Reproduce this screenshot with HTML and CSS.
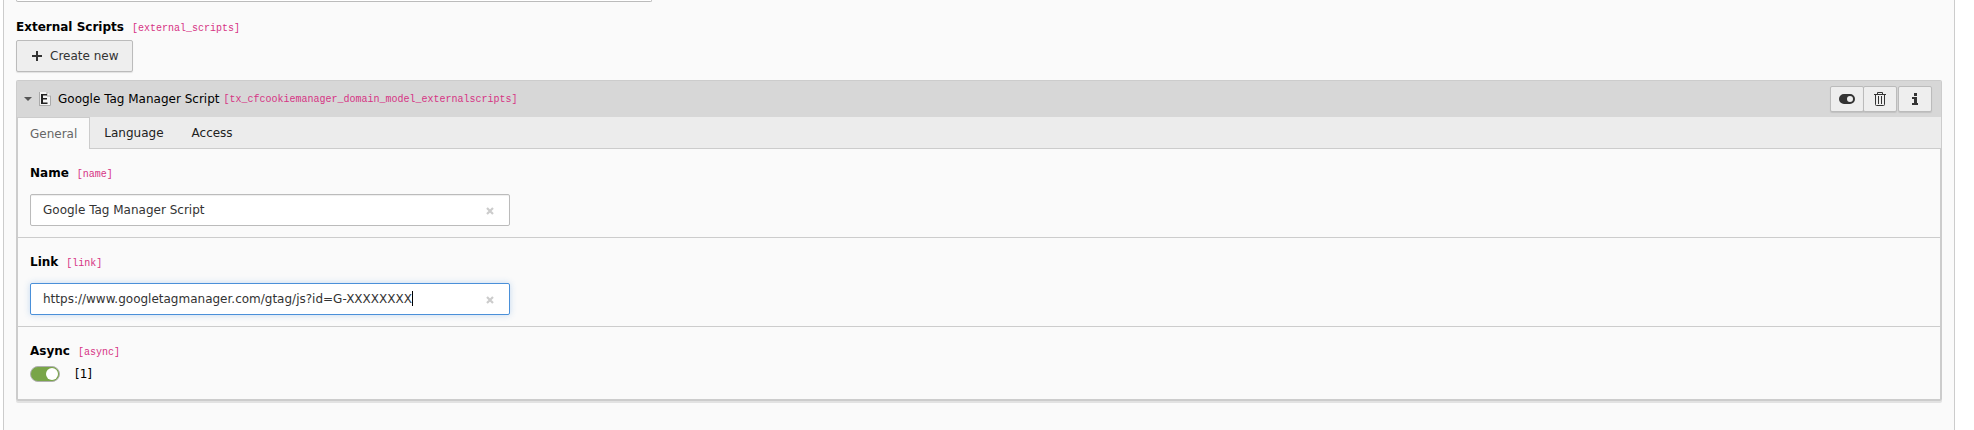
FILE: index.html
```html
<!DOCTYPE html>
<html lang="en">
<head>
<meta charset="utf-8">
<title>External Scripts</title>
<link rel="stylesheet" href="styles.css">
</head>
<body>
<main class="pane">
  <div class="previous-field"></div>
  <div class="heading"><strong>External Scripts</strong><code>[external_scripts]</code></div>
  <button class="btn create" type="button">
    <svg width="10" height="10" viewBox="0 0 10 10" aria-hidden="true"><path d="M4 0h2v4h4v2H6v4H4V6H0V4h4z" fill="#333"/></svg>
    Create new
  </button>
  <section class="record">
    <header class="record-header">
      <svg class="caret" width="8" height="4" viewBox="0 0 8 4" aria-hidden="true"><path d="M0 0h8L4 4z" fill="#555"/></svg>
      <svg class="file" width="12" height="14" viewBox="0 0 12 14" aria-hidden="true"><path d="M0 0h8l4 4v10H0z" fill="#f4f4f4"/><path d="M8 0v4h4M11.5 4v9.5H0M.5 14V0" fill="none" stroke="#aaa"/><path d="M2 2h6v1.500H4V6h4v1.500H4v3h4.500V12H2z" fill="#222"/></svg>
      <span class="record-title">Google Tag Manager Script</span>
      <code>[tx_cfcookiemanager_domain_model_externalscripts]</code>
      <div class="actions">
        <div class="group">
          <button class="btn icon" type="button" aria-label="Toggle visibility"><svg width="16" height="10" viewBox="0 0 16 10"><path d="M5 0h6a5 5 0 0 1 0 10H5A5 5 0 0 1 5 0zm6 2a3 3 0 1 0 0 6 3 3 0 0 0 0-6z" fill="#333" fill-rule="evenodd"/></svg></button>
          <button class="btn icon" type="button" aria-label="Delete"><svg width="12" height="14" viewBox="0 0 12 14" fill="none" stroke="#333"><path d="M0 2.500h12M3.500 2V.5h5V2M1.500 3v9.500q0 1 1 1h7q1 0 1-1V3M4.500 4v8M7.500 4v8"/></svg></button>
        </div>
        <button class="btn icon" type="button" aria-label="Information"><svg width="6" height="12" viewBox="0 0 6 12"><path d="M2 0h3v3H2zM0 4h5v6h1v2H0v-2h2V6H0z" fill="#333"/></svg></button>
      </div>
    </header>
    <nav class="tabs">
      <button class="tab active" type="button">General</button>
      <button class="tab" type="button">Language</button>
      <button class="tab" type="button">Access</button>
    </nav>
    <div class="fields">
      <div class="field">
        <label class="label" for="name"><strong>Name</strong><code>[name]</code></label>
        <div class="control">
          <input class="text" id="name" type="text" value="Google Tag Manager Script">
          <button class="clear" type="button" aria-label="Clear name"><svg width="8" height="8" viewBox="0 0 8 8"><path d="M1 1l6 6M7 1L1 7" stroke="#ccc" stroke-width="2.200"/></svg></button>
        </div>
      </div>
      <div class="field">
        <label class="label" for="link"><strong>Link</strong><code>[link]</code></label>
        <div class="control">
          <input class="text focused" id="link" type="text" value="https://www.googletagmanager.com/gtag/js?id=G-XXXXXXXX">
          <span class="cursor"></span>
          <button class="clear" type="button" aria-label="Clear link"><svg width="8" height="8" viewBox="0 0 8 8"><path d="M1 1l6 6M7 1L1 7" stroke="#ccc" stroke-width="2.200"/></svg></button>
        </div>
      </div>
      <div class="field">
        <label class="label" for="async"><strong>Async</strong><code>[async]</code></label>
        <div class="switch-row"><input class="switch" id="async" type="checkbox" checked><label for="async">[1]</label></div>
      </div>
    </div>
  </section>
</main>
</body>
</html>
```
FILE: styles.css
```css
* { box-sizing: border-box; }
body {
  margin: 0;
  background: #fff;
  color: #000;
  font: 12px/18px Verdana, "DejaVu Sans", sans-serif;
}
button, input { font: inherit; color: #333; margin: 0; }
svg { display: block; flex: none; }
code { color: #d63384; font: 10px/12px Consolas, "Liberation Mono", monospace; }
.pane {
  min-height: 100vh;
  margin: 0 19px 0 3px;
  padding: 0 12px;
  border: solid #ccc;
  border-width: 0 1px;
  background: #fafafa;
}
.previous-field {
  height: 2px;
  max-width: 636px;
  border: 1px solid #bbb;
  border-top: 0;
  border-radius: 0 0 2px 2px;
  background: #fff;
}
.heading, .label { display: flex; align-items: baseline; gap: 8px; }
.heading { padding: 16px 0 4px; }
.btn {
  display: flex;
  align-items: center;
  justify-content: center;
  border: 1px solid #bbb;
  border-radius: 2px;
  background: #eee;
  box-shadow: 0 1px 1px rgba(0, 0, 0, .1);
}
.create { gap: 8px; height: 32px; padding: 0 13px 0 15px; }
.record {
  margin-top: 8px;
  border: 1px solid #ccc;
  border-bottom-width: 2px;
  border-radius: 2px;
  box-shadow: 0 2px 0 #e2e2e2;
}
.record-header {
  display: flex;
  align-items: center;
  height: 36px;
  padding: 0 9px 0 7px;
  background: #d7d7d7;
}
.record-header code { padding-top: 2px; }
.file { margin: 0 7px; }
.record-title { margin-right: 4px; }
.actions { display: flex; gap: 1px; margin-left: auto; }
.group { display: flex; }
.icon { width: 34px; height: 26px; padding: 0; }
.group .icon + .icon { margin-left: -1px; }
.tabs { display: flex; height: 32px; background: #ececec; border-bottom: 1px solid #ccc; }
.tab { height: 31px; padding: 0 14px; border: 0; background: none; color: #212121; }
.tab.active {
  height: 32px;
  padding: 0 12px;
  border: 1px solid #ccc;
  border-bottom: 0;
  background: #fafafa;
  color: #666;
}
.fields { border: solid #ccc; border-width: 0 1px; }
.field { padding: 15px 12px 11px; border-bottom: 1px solid #ccc; }
.field:last-child { padding-bottom: 16px; border-bottom: 0; }
.control { position: relative; max-width: 480px; margin-top: 12px; }
.text {
  display: block;
  width: 100%;
  height: 32px;
  padding: 0 32px 0 12px;
  border: 1px solid #bbb;
  border-radius: 2px;
  outline: 0;
  background: #fff;
  box-shadow: inset 0 1px 1px rgba(0, 0, 0, .07);
}
.text.focused { border-color: #4a90d9; box-shadow: 0 0 6px rgba(74, 144, 217, .3); }
.clear { position: absolute; top: 9px; right: 12px; padding: 4px; border: 0; background: none; }
.cursor { position: absolute; top: 8px; left: 382px; width: 1px; height: 15px; background: #000; }
.switch-row { display: flex; align-items: center; gap: 15px; margin-top: 5px; }
.switch {
  appearance: none;
  display: flex;
  justify-content: flex-end;
  width: 30px;
  height: 16px;
  padding: 1px;
  border: 1px solid #b0b0b0;
  border-radius: 8px;
  background: #79a548;
}
.switch::after { content: ""; width: 12px; height: 12px; border-radius: 50%; background: #fff; }
```
